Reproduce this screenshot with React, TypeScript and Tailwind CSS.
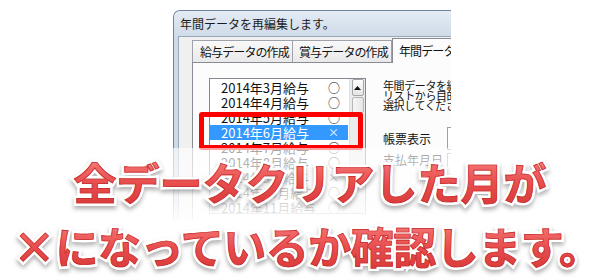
import React from "react";

const UI_FONT = '"Noto Sans CJK JP", "Noto Sans", sans-serif';

const months: { label: string; mark: string }[] = [
  { label: "2014年3月給与", mark: "○" },
  { label: "2014年4月給与", mark: "○" },
  { label: "2014年5月給与", mark: "○" },
  { label: "2014年6月給与", mark: "×" },
  { label: "2014年7月給与", mark: "○" },
  { label: "2014年8月給与", mark: "○" },
  { label: "2014年9月給与", mark: "×" },
  { label: "2014年10月給与", mark: "○" },
  { label: "2014年11月給与", mark: "○" },
];

function BigLine({ children, className = "" }: { children: React.ReactNode; className?: string }) {
  return (
    <div className={"grid h-[64px] leading-[64px] whitespace-nowrap " + className}>
      <span className="relative z-0 col-start-1 row-start-1 text-white [-webkit-text-stroke:6px_white] [filter:drop-shadow(0_3px_2px_rgba(0,0,0,0.3))]">
        {children}
      </span>
      <span className="relative z-10 col-start-1 row-start-1 bg-[linear-gradient(180deg,#fbb4b4_0%,#f26a6a_28%,#e84c4c_55%,#d53535_100%)] bg-clip-text text-transparent [-webkit-text-stroke:0.7px_#c42a2a]">
        {children}
      </span>
    </div>
  );
}

export default function App() {
  return (
    <div
      className="relative w-[612px] h-[279px] overflow-hidden bg-white"
      style={{ fontFamily: UI_FONT }}
    >
      {/* dialog window (cropped) */}
      <div className="pl-[173px] pt-[10px]">
        <div className="w-[278px] h-[210px] overflow-hidden rounded-tl-[7px] border-l border-t border-[#71839a] bg-[#cddae8] flex flex-col">
          <div className="h-[25px] shrink-0 flex items-center pl-[6px] text-[12px] text-[#1b1b1b] bg-[linear-gradient(180deg,#e4ecf5,#cfdbe8)] whitespace-nowrap">
            年間データを再編集します。
          </div>
          <div className="flex-1 flex pl-[4px]">
            <div className="flex-1 flex flex-col border-l border-t border-[#9aa7b6] bg-[#f0f0f0] pt-[1px] pl-[13px]">
              {/* tabs */}
              <div className="flex h-[24px] shrink-0 text-[12px] text-[#111] tracking-[-0.9px] whitespace-nowrap">
                <div className="mt-[2px] w-[101px] shrink-0 h-[22px] flex items-center pl-[7px] border-l border-t border-r border-[#9ea3ab] bg-[linear-gradient(180deg,#f9f9f9,#e9e9e9)]">
                  給与データの作成
                </div>
                <div className="mt-[2px] w-[99px] shrink-0 h-[22px] flex items-center pl-[6px] border-t border-r border-[#9ea3ab] bg-[linear-gradient(180deg,#f9f9f9,#e9e9e9)]">
                  賞与データの作成
                </div>
                <div className="relative z-10 w-[110px] shrink-0 h-[25px] flex items-center pl-[6px] pb-[1px] border-l border-t border-[#898c95] bg-[#fcfcfc]">
                  年間データの編集
                </div>
              </div>
              {/* panel */}
              <div className="flex-1 flex border-l border-t border-[#898c95] bg-[#fcfcfc] pl-[16px] pt-[15px] gap-[17px]">
                {/* list box */}
                <div className="w-[157px] h-[136px] shrink-0 flex border border-[#828790] bg-white">
                  <div className="w-[140px] pt-[1px] overflow-hidden text-[13px] leading-[15px]">
                    {months.map((m, i) => {
                      const sel = i === 3;
                      return (
                        <div
                          key={m.label}
                          className={
                            "h-[15px] flex items-center pl-[11px] mr-[1px] whitespace-nowrap " +
                            (sel ? "bg-[#3399ff] text-white" : "text-[#111]")
                          }
                        >
                          <span className="w-[107px] shrink-0">{m.label}</span>
                          <span className={m.mark === "×" ? "text-[11px]" : "text-[12px]"}>{m.mark}</span>
                        </div>
                      );
                    })}
                  </div>
                  <div className="w-[16px] flex flex-col items-center bg-[#ececec] border-l border-[#e0e0e0]">
                    <div className="w-[12px] h-[17px] flex items-center justify-center rounded-[2px] border border-[#a5a5a5] bg-[linear-gradient(180deg,#ffffff,#e4e4e4)]">
                      <svg width="7" height="4" viewBox="0 0 7 4">
                        <path d="M0 4 L3.5 0 L7 4 Z" fill="#111" />
                      </svg>
                    </div>
                    <div className="mt-[1px] w-[12px] h-[16px] rounded-[2px] border border-[#b5b5b5] bg-[linear-gradient(90deg,#f6f6f6,#e6e6e6)]" />
                  </div>
                </div>
                {/* right column */}
                <div className="flex flex-col pt-[2px] whitespace-nowrap text-[#111]">
                  <div className="text-[11px] leading-[10px] tracking-[-0.4px]">
                    <div>年間データを編集します。</div>
                    <div>リストから目的の月を</div>
                    <div>選択してください。</div>
                  </div>
                  <div className="mt-[17px] flex items-center h-[23px]">
                    <span className="w-[64px] text-[12px]">帳票表示</span>
                    <div className="w-[60px] h-[23px] border border-[#a0a0a0] bg-white" />
                  </div>
                  <div className="mt-[3px] flex items-center h-[14px]">
                    <span className="w-[64px] text-[12px]">支払年月日</span>
                    <div className="w-[60px] h-[14px] border-t border-l border-[#a0a0a0] bg-white" />
                  </div>
                </div>
              </div>
            </div>
          </div>
        </div>
      </div>

      {/* red highlight frame */}
      <div className="absolute left-[199px] top-[112px] w-[164px] h-[38px] rounded-[3px] border-[5px] border-[#ff0000]" />

      {/* fade of the screenshot */}
      <div className="absolute left-0 right-0 top-[148px] bottom-0 bg-[linear-gradient(180deg,rgba(255,255,255,0.62)_0%,rgba(255,255,255,0.8)_40%,#ffffff_65%)]" />

      {/* caption */}
      <div
        className="absolute left-0 right-0 top-[149px] flex flex-col items-center text-[43px] font-bold"
        style={{ fontFamily: '"Noto Sans CJK JP", sans-serif' }}
      >
        <BigLine className="ml-[8px]">全データクリアした月が</BigLine>
        <BigLine className="tracking-[-0.5px] ml-[2px]">
          <span className="inline-block w-[43px] text-center">×</span>
          になっているか確認します。
        </BigLine>
      </div>
    </div>
  );
}
